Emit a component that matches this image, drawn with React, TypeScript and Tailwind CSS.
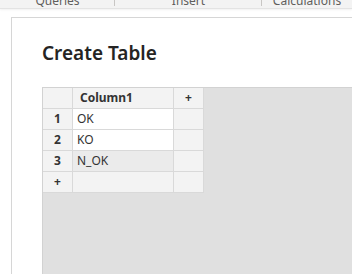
import React from 'react';

const FONT = { fontFamily: '"Segoe UI", "Noto Sans", "Open Sans", sans-serif' };

const ROWS = [
  { n: '1', value: 'OK', cell: 'bg-white' },
  { n: '2', value: 'KO', cell: 'bg-white' },
  { n: '3', value: 'N_OK', cell: 'bg-[#ebebeb]' },
];

/**
 * Ribbon strip cut off at the top of the window
 */
function Ribbon() {
  const tabs = [
    { label: 'Queries', w: 'w-[115px]' },
    { label: 'Insert', w: 'w-[147px]' },
    { label: 'Calculations', w: 'flex-1' },
  ];
  return (
    <div className="flex h-[9px] overflow-hidden bg-[#f3f3f3] border-b border-[#e3e3e3] shadow-[0_1px_2px_rgba(0,0,0,0.06)]">
      {tabs.map((t, i) => (
        <div key={t.label} className={`${t.w} relative flex justify-center`}>
          <span className="-mt-[7px] text-[12px] leading-[16px] text-[#605e5c]">{t.label}</span>
          {i < tabs.length - 1 && (
            <span className="absolute right-0 top-0 h-[6px] w-px bg-[#c8c6c4]" aria-hidden="true"></span>
          )}
        </div>
      ))}
    </div>
  );
}

function Cell({ className = '', children }: { className?: string; children?: React.ReactNode }) {
  return <div className={`h-[20px] flex items-center text-[12px] text-[#333] ${className}`}>{children}</div>;
}

export default function App() {
  return (
    <div className="h-[274px] w-[352px] overflow-hidden bg-white" style={FONT}>
      <Ribbon />

      {/* Dialog */}
      <div className="mt-[8px] ml-[11px] h-[300px] border-l border-t border-[#d6d6d6] bg-white pl-[30px]">
        <h1 className="pt-[21px] text-[19px] leading-[28px] font-semibold text-[#252423]">Create Table</h1>

        {/* Table editor area */}
        <div className="mt-[20px] h-[200px] bg-[#e0e0e0] border-l border-t border-[#d2d2d2]">
          <div className="grid w-fit grid-cols-[29px_100px_29px] gap-px bg-[#d9d9d9] border-r border-b border-[#d9d9d9]">
            <Cell className="bg-[#f3f3f3]" />
            <Cell className="bg-[#f3f3f3] pl-[7px] font-bold">Column1</Cell>
            <Cell className="bg-[#f3f3f3] justify-center font-bold">+</Cell>

            {ROWS.map((r) => (
              <React.Fragment key={r.n}>
                <Cell className="bg-[#f3f3f3] justify-center font-bold">{r.n}</Cell>
                <Cell className={`${r.cell} pl-[4px]`}>{r.value}</Cell>
                <Cell className="bg-[#f3f3f3]" />
              </React.Fragment>
            ))}

            <Cell className="bg-[#f3f3f3] justify-center font-bold">+</Cell>
            <Cell className="bg-[#f3f3f3]" />
            <Cell className="bg-[#f3f3f3]" />
          </div>
        </div>
      </div>
    </div>
  );
}
